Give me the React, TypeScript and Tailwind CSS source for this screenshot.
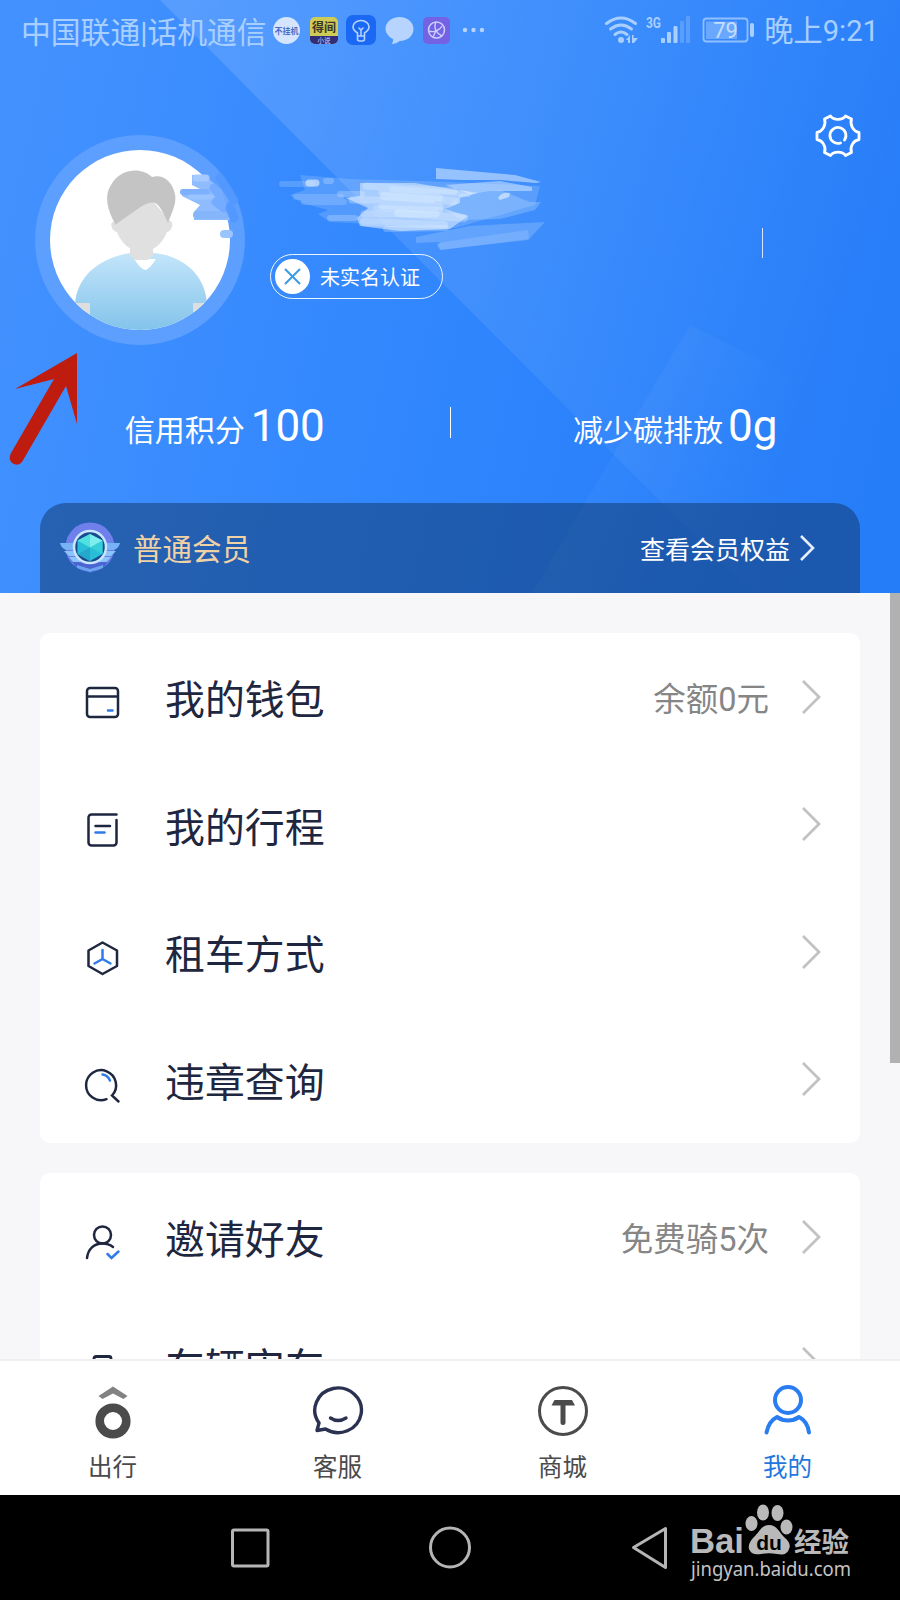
import React from "react";

interface RowProps {
  icon: React.ReactNode;
  label: string;
  value?: string;
}

const INK = "#1f2740";
const BLUE = "#2f7bea";

function HeaderBackground() {
  return (
    <svg className="absolute inset-0" width="900" height="593" viewBox="0 0 900 593" fill="none">
      <defs>
        <linearGradient id="base" gradientUnits="userSpaceOnUse" x1="0" y1="200" x2="900" y2="400">
          <stop offset="0" stopColor="#4391ff" />
          <stop offset="0.5" stopColor="#3086fd" />
          <stop offset="1" stopColor="#237bf8" />
        </linearGradient>
        <linearGradient id="sheen" gradientUnits="userSpaceOnUse" x1="200" y1="0" x2="880" y2="240">
          <stop offset="0" stopColor="#fff" stopOpacity="0.13" />
          <stop offset="0.5" stopColor="#fff" stopOpacity="0.08" />
          <stop offset="1" stopColor="#fff" stopOpacity="0.015" />
        </linearGradient>
        <linearGradient id="fold" gradientUnits="userSpaceOnUse" x1="600" y1="480" x2="710" y2="544">
          <stop offset="0" stopColor="#fff" stopOpacity="0.035" />
          <stop offset="1" stopColor="#fff" stopOpacity="0" />
        </linearGradient>
      </defs>
      <rect width="900" height="593" fill="url(#base)" />
      <path d="M160 0H900V593H752Z" fill="url(#sheen)" />
      <path d="M690 325L532 593H800V380Z" fill="url(#fold)" />
    </svg>
  );
}

function StatusBar() {
  return (
    <div className="relative flex h-[62px] items-center pl-[21px] pr-[21px] text-[#a9cfff]">
      <span className="pt-[3px] text-[29.8px] font-[380] leading-none whitespace-nowrap">中国联通|话机通信</span>
      <svg className="ml-[4px]" width="215" height="34" viewBox="271 14 215 34" fill="none">
        <circle cx="286.500" cy="30.500" r="13.500" fill="#d5e5fd" />
        <text x="286.500" y="34" textAnchor="middle" fontSize="8" fontWeight="700" fill="#4b6cc4">不挂机</text>
        <rect x="310" y="17" width="28" height="27" rx="5" fill="#cfcb54" />
        <path d="M310 36h28v3a5 5 0 0 1-5 5h-18a5 5 0 0 1-5-5Z" fill="#322d78" />
        <text x="324" y="32" textAnchor="middle" fontSize="12" fontWeight="700" fill="#393426">得间</text>
        <text x="324" y="43" textAnchor="middle" fontSize="6.500" fill="#d9d9ff">小说</text>
        <rect x="346" y="15" width="30" height="30" rx="7" fill="#1b68f4" />
        <path d="M357.500 36v-3c-3-2-4.500-4-4.500-6a8 6.500 0 0 1 16 0c0 2-1.500 4-4.500 6v3M357.500 36v3q0 2 2 2h3q2 0 2-2v-3ZM359 28l2 2 2-2M361 30v5" stroke="#b4d3ff" strokeWidth="1.600" strokeLinecap="round" />
        <path d="M399.500 17c8 0 14 5 14 12s-6 12-14 12c-2 2-5 3-8 3 1-1 2-3 1.500-5-4-2-7.500-6-7.500-10 0-7 6-12 14-12Z" fill="#b7d4ff" />
        <rect x="423" y="17" width="27" height="27" rx="5" fill="#7561e3" />
        <circle cx="436.500" cy="30" r="8" stroke="#c9d2ff" strokeWidth="1.500" />
        <path d="M436 22c-3 6 1 12 6 14M429 31c5 2 11-1 13-5M436 31l-3 6" stroke="#c9d2ff" strokeWidth="1.400" />
        <g fill="#b7d4ff">
          <circle cx="465" cy="30" r="2.200" />
          <circle cx="473.500" cy="30" r="2.200" />
          <circle cx="482" cy="30" r="2.200" />
        </g>
      </svg>
      <svg className="ml-auto" width="154" height="34" viewBox="603 14 154 34" fill="none">
        <g stroke="#a9cfff" strokeWidth="3" strokeLinecap="round">
          <path d="M606.500 23.500q14.500-11 29 0" />
          <path d="M610.500 29q10.500-8 21 0" />
          <path d="M615 34.500q6-5 12 0" />
        </g>
        <circle cx="621" cy="40" r="3" fill="#a9cfff" />
        <path d="M626 40l4-5v8h-2v-3ZM632 35h1.500v3H638l-4 5h-2Z" fill="#a9cfff" />
        <text x="646" y="28" fontSize="15" fontWeight="700" textLength="15" lengthAdjust="spacingAndGlyphs" fill="#a9cfff">3G</text>
        <g fill="#a9cfff">
          <rect x="661" y="38" width="4" height="5" rx="1" />
          <rect x="667" y="32" width="4" height="11" rx="1" />
          <rect x="673.500" y="26" width="4" height="17" rx="1" />
          <rect x="680" y="21" width="4" height="22" rx="1" opacity="0.3" />
          <rect x="686" y="16" width="4" height="27" rx="1" opacity="0.3" />
        </g>
        <rect x="703.500" y="18.500" width="44" height="23" rx="3" stroke="#8fbfff" strokeWidth="1.800" />
        <rect x="706" y="21.500" width="31" height="17.500" fill="#6aa8ff" />
        <rect x="750" y="23" width="4" height="14" rx="2" fill="#a9cfff" />
        <text x="725.500" y="38" textAnchor="middle" fontSize="22" fill="#c5defe">79</text>
      </svg>
      <span className="ml-[7px] pt-[2px] text-[29.2px] font-[380] leading-none whitespace-nowrap">晚上9:21</span>
    </div>
  );
}

function Avatar() {
  return (
    <svg width="210" height="210" viewBox="35 135 210 210" fill="none">
      <defs>
        <clipPath id="face">
          <circle cx="140" cy="240" r="90" />
        </clipPath>
        <linearGradient id="shirt" x1="0" y1="0" x2="0" y2="1">
          <stop offset="0" stopColor="#c3e5fa" />
          <stop offset="1" stopColor="#7dc0e9" />
        </linearGradient>
      </defs>
      <circle cx="140" cy="240" r="105" fill="#5c9fff" />
      <circle cx="140" cy="240" r="90" fill="#fff" />
      <g clipPath="url(#face)">
        <path d="M74 303h16v30H74ZM192 303h20v30H192Z" fill="#dedede" />
        <path d="M75 303c3-28 25-45 55-50h24c30 3 51 22 53 50h-14v35H90v-35Z" fill="url(#shirt)" />
        <path d="M134 259h22q-5 8-10 11-4 1-12-11Z" fill="#fff" />
        <path d="M130 244h23v11q-5 5-5 5h-13q-5-5-5-5Z" fill="#e0e0e0" />
        <path d="M114 222L150 198L170 221C174 221 173 231 167 232C163 243 153 252 142 252C131 252 121 243 117 232C110 231 110 220 114 222Z" fill="#e0e0e0" />
        <path d="M115.500 224.500C107 210 104 195 111 185C119 169 141 166 152 177C163 174 172 181 175 194C177 204 171 214 168 223C164 214 160 206 156 203.500C152 201 146 204 142 206Z" fill="#c4c4c4" />
      </g>
    </svg>
  );
}

function Smudge() {
  return (
    <svg className="pointer-events-none absolute left-[165px] top-[145px]" width="390" height="115" viewBox="165 145 390 115" strokeLinecap="round" strokeLinejoin="round" fill="none">
      <path d="M192 175H204L222 190L230 218V220H194V212L200 205L182 196V189H200L192 185Z" fill="#8fbcff" />
      <g>
        <path d="M196 178h10" stroke="#a6caff" strokeWidth="7" />
        <path d="M183 192h24" stroke="#7db0ff" strokeWidth="6" />
        <path d="M190 197h22" stroke="#9ac4ff" strokeWidth="5" />
        <path d="M197 215h28" stroke="#85b6fb" strokeWidth="8" />
        <path d="M224 234h5" stroke="#9ac4ff" strokeWidth="8" />
        <path d="M214 188l10 12M216 202l8 6" stroke="#6fa8ff" strokeWidth="9" opacity="0.8" />
        <path d="M220 178l14 22M230 208l4 10" stroke="#5096ff" strokeWidth="9" opacity="0.8" />
      </g>
      <path d="M300 175L350 179L450 182L540 186L535 205L455 228L330 222L318 214L328 210L302 203L290 195L305 190Z" fill="#fff" opacity="0.15" />
      <path d="M360 183L415 183L445 188L478 193L460 198L460 203L445 209L468 216L450 229L400 231L360 226L357 218L368 208L346 198L360 196Z" fill="#d5e8ff" opacity="0.6" />
      <g stroke="#e8f4ff">
        <path d="M282 184h30M296 197h45M304 202h40" strokeWidth="6" opacity="0.18" />
        <path d="M309 183h7" strokeWidth="7" opacity="0.6" />
        <path d="M326 181h5M340 194h22M330 218h25" strokeWidth="6" opacity="0.25" />
        <path d="M366 186l88 5M382 192l58 6M352 200h80M382 206l58 1M364 214h72" strokeWidth="7" opacity="0.3" />
        <path d="M384 196l70 5M364 222l80 3M398 213l66 5" strokeWidth="8" opacity="0.3" />
        <path d="M392 189l76 5M376 208l64 2M386 229l60-1" strokeWidth="6" opacity="0.25" />
      </g>
      <g fill="#e8f4ff">
        <path d="M436 168L470 171L515 175L541 182L536 183L500 180L462 180L436 179Z" opacity="0.5" />
        <path d="M445 185L500 181L532 187V191L490 191L470 194Z" opacity="0.45" />
        <path d="M460 194L500 190L530 202L541 202L535 210L500 219L462 220L445 210Z" opacity="0.22" />
        <path d="M498 198q3-6 12-5l-1 4-9 3Z" opacity="0.6" />
        <path d="M416 237L470 226L545 222L530 238L528 240L440 250L437 246L441 242L416 243Z" opacity="0.2" />
        <path d="M437 243L528 230L529 239L441 250Z" opacity="0.15" />
      </g>
    </svg>
  );
}

function GearIcon() {
  return (
    <svg width="46" height="44" viewBox="0 0 46 44" fill="none" stroke="#fff" strokeWidth="2.800" strokeLinejoin="round" strokeLinecap="round">
      <path d="M15.500 2C18.500 6.500 27.500 6.500 30.500 2L36.500 5C34.500 11 38.500 17.500 44 18.500V25.500C38.500 26.500 34.500 32.500 36.500 38.500L30.500 41.500C27.500 37 18.500 37 15.500 41.500L9.500 38.500C11.500 32.500 7.500 26.500 2 25.500V18.500C7.500 17.500 11.500 11 9.500 5Z" />
      <path d="M29.500 26a8 8 0 1 0-4 3" />
    </svg>
  );
}

function Chevron() {
  return (
    <svg width="20" height="36" viewBox="0 0 20 36" fill="none" stroke="#c2c2c2" strokeWidth="2.800">
      <path d="M2 2L18 18L2 34" />
    </svg>
  );
}

function MemberBadge() {
  return (
    <svg width="60" height="52" viewBox="0 0 60 52" fill="none">
      <circle cx="30" cy="25" r="24.500" fill="#6f7fec" />
      <path d="M10 36q20 12 40 0l-5 8-15 7-15-7Z" fill="#4a64d0" />
      <path d="M0 21h15l1 7H6q-5-2-6-7ZM60 21H45l-1 7h10q5-2 6-7Z" fill="#78b2f6" />
      <path d="M4 29h12l1 5H9ZM56 29H44l-1 5h8ZM9 35h9l3 5h-8ZM51 35h-9l-3 5h8Z" fill="#8cc3fa" />
      <path d="M17 43l13 4 13-4v3l-13 4-13-4Z" fill="#6ca5ef" />
      <circle cx="30" cy="25" r="16" fill="#1a4b8e" stroke="#c8e7ff" strokeWidth="2.500" />
      <path d="M30 12l12.500 6.500v13.500L30 39l-12.500-7V18.500Z" fill="#29bed8" />
      <path d="M30 12v13.500L17.500 18.500Z" fill="#50e0e0" />
      <path d="M30 25.500l12.500-7V32Z" fill="#35cfd9" />
      <path d="M30 12l12.500 6.500-12.500 7Z" fill="#7ceeed" />
      <path d="M17.500 32l12.500-6.500V39Z" fill="#27a7cc" />
    </svg>
  );
}

function WalletIcon() {
  return (
    <svg width="40" height="40" viewBox="0 0 40 40" fill="none" stroke={INK} strokeWidth="2.500">
      <rect x="5" y="5" width="31" height="29" rx="3" />
      <path d="M5 13.500h31" />
      <path d="M26 27.500h4.500" stroke={BLUE} strokeLinecap="round" />
    </svg>
  );
}

function TripIcon() {
  return (
    <svg width="40" height="40" viewBox="0 0 40 40" fill="none" stroke={INK} strokeWidth="2.500" strokeLinecap="round">
      <path d="M34.500 4.500H9.500a3 3 0 0 0-3 3v25a3 3 0 0 0 3 3h22a3 3 0 0 0 3-3V10" />
      <path d="M13.500 16h14.500" />
      <path d="M13.500 22.500h9" stroke={BLUE} />
    </svg>
  );
}

function RentIcon() {
  return (
    <svg width="40" height="40" viewBox="0 0 40 40" fill="none" stroke={INK} strokeWidth="2.500" strokeLinejoin="round" strokeLinecap="round">
      <path d="M20.500 4.500L35 12.500v15.500L20.500 36L6.500 28V12.500Z" />
      <path d="M20.500 12v9L12.500 25.500M20.500 21l8 4.500" stroke={BLUE} />
    </svg>
  );
}

function SearchIcon() {
  return (
    <svg width="40" height="40" viewBox="0 0 40 40" fill="none" stroke={INK} strokeWidth="2.500" strokeLinecap="round">
      <path d="M24.500 34.200A15 15 0 1 1 30 30.500L36.500 36.500" />
      <path d="M20.500 9.500a9.500 9.500 0 0 1 7.500 6" stroke={BLUE} />
    </svg>
  );
}

function InviteIcon() {
  return (
    <svg width="40" height="40" viewBox="0 0 40 40" fill="none" stroke={INK} strokeWidth="2.500" strokeLinecap="round">
      <circle cx="20.500" cy="12" r="8.500" />
      <path d="M5 35C6 26 12 20.500 20.500 20.500Q26.500 20.500 31 24" />
      <path d="M25.500 31l4 4 7-6.500" stroke={BLUE} />
    </svg>
  );
}

function VerifyIcon() {
  return (
    <svg width="40" height="40" viewBox="0 0 40 40" fill="none" stroke={INK} strokeWidth="2.800">
      <path d="M12 14V8.500a2 2 0 0 1 2-2h13a2 2 0 0 1 2 2v5.500M5 14h30v22H5Z" />
    </svg>
  );
}

function MenuRow({ icon, label, value }: RowProps) {
  return (
    <div className="flex h-[127.5px] shrink-0 items-center pl-[42px] pr-[39px]">
      <div className="pt-3">{icon}</div>
      <span className="ml-[43px] pt-[9px] text-[39.9px] font-[380] leading-none text-[#1f2740]">{label}</span>
      <span className="ml-auto mr-[32px] pt-[6px] text-[32.5px] font-[380] leading-none text-[#868686]">{value}</span>
      <Chevron />
    </div>
  );
}

const TABS = [
  {
    label: "出行",
    color: "text-[#4a4a4a]",
    icon: (
      <svg width="52" height="54" viewBox="0 0 52 54" fill="none">
        <path d="M11.500 11L26 1.500L40.500 11L36.500 14L26 8.500L15.500 14Z" fill="#828282" />
        <circle cx="26" cy="36" r="13.300" stroke="#4b4b4b" strokeWidth="8.600" />
      </svg>
    ),
  },
  {
    label: "客服",
    color: "text-[#4a4a4a]",
    icon: (
      <svg width="52" height="54" viewBox="0 0 52 54" fill="none" stroke="#2b3150" strokeWidth="3.400" strokeLinecap="round" strokeLinejoin="round">
        <path d="M7 38A23.300 22.300 0 1 1 13.500 44L5 45.500L7 38" />
        <path d="M18.500 33q7.500 5 15.500 0" />
      </svg>
    ),
  },
  {
    label: "商城",
    color: "text-[#4a4a4a]",
    icon: (
      <svg width="52" height="54" viewBox="0 0 52 54" fill="none">
        <circle cx="26" cy="26" r="23.500" stroke="#4b4b4b" strokeWidth="3" />
        <path d="M17.500 15h17.500l3 5.500h-9.500v17a2.500 2.500 0 0 1-5 0v-17H14.500Z" fill="#4b4b4b" />
      </svg>
    ),
  },
  {
    label: "我的",
    color: "text-[#2276dd]",
    icon: (
      <svg width="52" height="54" viewBox="0 0 52 54" fill="none" stroke="#2a7df0" strokeWidth="4" strokeLinecap="round" strokeLinejoin="round">
        <circle cx="26" cy="15" r="13" />
        <path d="M4.500 47.500C6 40 10 34.500 15 32Q20 35.500 26 35.500T37 32C42 34.500 46 40 47 47.500" />
      </svg>
    ),
  },
];

export default function App() {
  return (
    <div className="relative flex h-[1600px] w-[900px] flex-col overflow-hidden bg-[#f7f7f9] font-[Roboto,'Noto_Sans_CJK_SC',sans-serif]">
      <header className="relative flex h-[593px] shrink-0 flex-col text-white">
        <HeaderBackground />
        <StatusBar />

        <div className="relative flex h-[283px] pl-[35px] pr-[39px]">
          <div className="pt-[73px]">
            <Avatar />
          </div>
          <div className="ml-[25px] mt-[192px] flex h-[45px] w-[173px] items-center rounded-full border-[1.5px] border-white/90 pl-[4px]">
            <svg width="35" height="35" viewBox="0 0 35 35" fill="none">
              <circle cx="17.500" cy="17.500" r="17.500" fill="#fff" />
              <path d="M10.500 10.500l14 14M24.500 10.500l-14 14" stroke="#3d9be0" strokeWidth="2" strokeLinecap="round" />
            </svg>
            <span className="ml-[10px] pt-[2px] text-[20px] leading-none">未实名认证</span>
          </div>
          <div className="ml-auto flex w-[99px] flex-col pt-[52px]">
            <div className="self-end">
              <GearIcon />
            </div>
            <div className="mt-[70px] h-[30px] w-px bg-white/80" />
          </div>
        </div>

        <div className="relative flex h-[158px] items-start">
          <div className="flex flex-1 items-baseline justify-center gap-[6px] pt-[59px]">
            <span className="text-[30px] font-[380] leading-none">信用积分</span>
            <span className="text-[44px] leading-none">100</span>
          </div>
          <div className="mt-[62px] h-[31px] w-px bg-white" />
          <div className="flex flex-1 items-baseline justify-center gap-[5px] pt-[59px]">
            <span className="text-[30px] font-[380] leading-none">减少碳排放</span>
            <span className="text-[44px] leading-none">0g</span>
          </div>
        </div>

        <div className="relative mx-[40px] flex h-[90px] items-center rounded-t-[26px] bg-[#0f3363]/50 pl-[20px] pr-[45px]">
          <MemberBadge />
          <span className="ml-[13px] pt-[6px] text-[29.5px] font-[380] leading-none text-[#f0d2a6]">普通会员</span>
          <span className="ml-auto pt-[4px] text-[25px] font-[380] leading-none">查看会员权益</span>
          <svg className="ml-[9px]" width="16" height="28" viewBox="0 0 16 28" fill="none" stroke="#e6eefb" strokeWidth="2.600">
            <path d="M2 2l12 12L2 26" />
          </svg>
        </div>

        <Smudge />
      </header>

      <main className="relative flex h-[766px] shrink-0 flex-col gap-[30px] overflow-hidden px-[40px] pt-[40px]">
        <section className="flex shrink-0 flex-col rounded-[10px] bg-white">
          <MenuRow icon={<WalletIcon />} label="我的钱包" value="余额0元" />
          <MenuRow icon={<TripIcon />} label="我的行程" />
          <MenuRow icon={<RentIcon />} label="租车方式" />
          <MenuRow icon={<SearchIcon />} label="违章查询" />
        </section>
        <section className="flex shrink-0 flex-col rounded-[10px] bg-white">
          <MenuRow icon={<InviteIcon />} label="邀请好友" value="免费骑5次" />
          <MenuRow icon={<VerifyIcon />} label="车辆审车" />
        </section>
        <div className="absolute right-0 top-0 h-[470px] w-[10px] bg-[#b1b1b1]" />
      </main>

      <nav className="flex h-[136px] shrink-0 border-t-2 border-[#efeff1] bg-white">
        {TABS.map((tab) => (
          <div key={tab.label} className="flex flex-1 flex-col items-center pt-[24px]">
            {tab.icon}
            <span className={`mt-[17px] text-[24.5px] font-[380] leading-none ${tab.color}`}>{tab.label}</span>
          </div>
        ))}
      </nav>

      <footer className="flex flex-1 bg-black">
        <svg className="ml-[229px] mt-[31px]" width="440" height="44" viewBox="229 1526 440 44" fill="none" stroke="#b5b5b5" strokeWidth="3" strokeLinejoin="round">
          <rect x="232.500" y="1530" width="35.500" height="36" rx="1.500" />
          <circle cx="450" cy="1547.500" r="19.500" />
          <path d="M665.500 1528.500v39L633.500 1547.500Z" />
        </svg>
        <svg className="ml-[16px] mt-[2px]" width="172" height="96" viewBox="685 1497 172 96" fill="#b9b9b9">
          <text x="690" y="1553" fontSize="35" fontWeight="700" textLength="54" lengthAdjust="spacingAndGlyphs" fontFamily="Liberation Sans">Bai</text>
          <ellipse cx="751.500" cy="1523.500" rx="6" ry="7.500" />
          <ellipse cx="763" cy="1512.500" rx="6" ry="8" />
          <ellipse cx="777.500" cy="1513" rx="6" ry="8" />
          <ellipse cx="786.500" cy="1527" rx="6" ry="7.500" />
          <path d="M769 1525c8 0 10 7 15 12 5 4 7 8 5 12-2 6-7 6-12 5-5-1-11-1-16 0-5 1-10 0-12-5-1-4 1-8 5-12 5-4 7-12 15-12Z" />
          <text x="769" y="1550" textAnchor="middle" fontSize="21" fontWeight="700" fontFamily="Liberation Sans" fill="#000">du</text>
          <text x="794" y="1552" fontSize="27" fontWeight="700" textLength="55" lengthAdjust="spacingAndGlyphs">经验</text>
          <text x="691" y="1576" fontSize="19" textLength="160" lengthAdjust="spacingAndGlyphs" fontFamily="Noto Sans" fill="#c4c4c4">jingyan.baidu.com</text>
        </svg>
      </footer>

      {/* pointer to the avatar */}
      <svg className="absolute left-[5px] top-[348px]" width="80" height="120" viewBox="5 348 80 120" fill="#bd1c0f">
        <path d="M77 353L77 424L66 386L22 462Q18 467 12 463Q8 459 11 453L54 379L15 389Z" />
      </svg>
    </div>
  );
}
